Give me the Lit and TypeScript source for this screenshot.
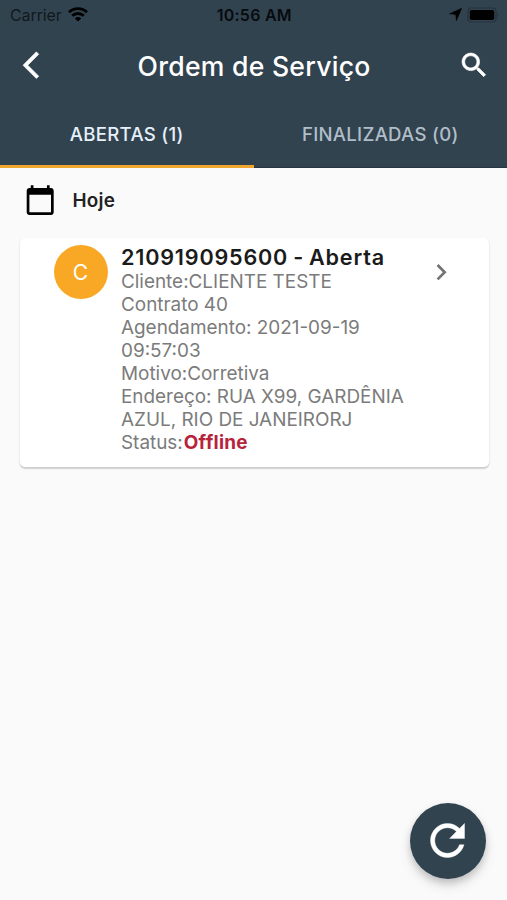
import { LitElement, html, css, svg } from "lit";
import { customElement, property } from "lit/decorators.js";

const icons = {
  back: "M11.67 3.87L9.9 2.1 0 12l9.9 9.9 1.77-1.77L3.54 12z",
  search:
    "M15.5 14h-.79l-.28-.27C15.41 12.59 16 11.11 16 9.5 16 5.91 13.09 3 9.5 3S3 5.91 3 9.5 5.91 16 9.5 16c1.61 0 3.09-.59 4.23-1.57l.27.28v.79l5 4.99L20.49 19l-4.99-5zm-6 0C7.01 14 5 11.99 5 9.5S7.01 5 9.5 5 14 7.01 14 9.5 11.99 14 9.5 14z",
  calendar:
    "M20 3h-1V1h-2v2H7V1H5v2H4c-1.1 0-2 .9-2 2v16c0 1.1.9 2 2 2h16c1.1 0 2-.9 2-2V5c0-1.1-.9-2-2-2zm0 18H4V8h16v13z",
  chevron: "M10 6L8.59 7.41 13.17 12l-4.58 4.59L10 18l6-6z",
  refresh:
    "M17.65 6.35C16.2 4.9 14.21 4 12 4c-4.42 0-7.99 3.58-7.99 8s3.57 8 7.99 8c3.73 0 6.84-2.55 7.73-6h-2.08c-.82 2.33-3.04 4-5.65 4-3.31 0-6-2.69-6-6s2.69-6 6-6c1.66 0 3.14.69 4.22 1.78L13 11h7V4l-2.35 2.35z",
};

@customElement("md-icon")
class MdIcon extends LitElement {
  @property() name: keyof typeof icons = "back";
  static styles = css`
    :host { display: block; width: 32.4px; height: 32.4px; flex: none; }
    svg { display: block; width: 100%; height: 100%; overflow: visible; fill: currentColor; stroke: currentColor; stroke-width: var(--weight, 0); stroke-linejoin: round; }
  `;
  render() {
    return html`<svg viewBox="0 0 24 24">${svg`<path d=${icons[this.name]}></path>`}</svg>`;
  }
}

@customElement("status-bar")
class StatusBar extends LitElement {
  static styles = css`
    :host { display: grid; grid-template-columns: 1fr auto 1fr; align-items: center; height: 30px; padding: 0 7px 0 10px; color: #070b0e; font-size: 16px; }
    .left, .right { display: flex; align-items: center; }
    .carrier { letter-spacing: -0.1px; color: #10181e; }
    .wifi { width: 20px; height: 15px; margin: 0 0 1px 6.5px; }
    .time { margin-right: 1.5px; font-weight: 600; letter-spacing: 0.25px; }
    .right { justify-content: flex-end; padding-bottom: 1px; }
    .location { width: 13px; height: 13px; margin-right: 5px; }
    .battery { width: 33px; height: 16px; }
  `;
  render() {
    return html`
      <div class="left">
        <span class="carrier">Carrier</span>
        <svg class="wifi" viewBox="0 0 20 15" fill="none" stroke="#000" stroke-width="2.9">
          <path d="M1 5.2a13 13 0 0 1 18 0"></path>
          <path d="M4.2 8.8a8.3 8.3 0 0 1 11.6 0"></path>
          <path d="M10 14.6L6.8 11.4a4.6 4.6 0 0 1 6.4 0z" fill="#000" stroke="none"></path>
        </svg>
      </div>
      <span class="time">10:56 AM</span>
      <div class="right">
        <svg class="location" viewBox="0 0 13 13"><path d="M12.7.3L7.4 12.7 6.7 6.5.4 5.8z" stroke="#000" stroke-width=".5"></path></svg>
        <svg class="battery" viewBox="0 0 33 16">
          <rect x="1" y="1" width="28" height="14" rx="3.5" fill="none" stroke="#25323c" stroke-width="1.2"></rect>
          <rect x="2.8" y="3" width="24.4" height="10" rx="1.8"></rect>
          <path d="M30.5 5.8q2 2.2 0 4.4z" fill="#25323c"></path>
        </svg>
      </div>
    `;
  }
}

@customElement("order-card")
class OrderCard extends LitElement {
  static styles = css`
    :host { display: flex; align-items: flex-start; box-sizing: border-box; height: 229px; margin: 0 18.5px 0 20px; padding: 7px 31px 0 33.5px; border-radius: 5px; background: #fff; box-shadow: 0 1.4px 1.4px rgba(0,0,0,.14), 0 1px 3px rgba(0,0,0,.07); }
    .avatar { display: flex; align-items: center; justify-content: center; flex: none; width: 54px; height: 54px; border-radius: 50%; background: #f9a825; color: #fff; font-size: 21px; }
    .body { flex: 1; margin-left: 13.5px; white-space: nowrap; color: #7b7b7b; font-size: 18.9px; line-height: 22.95px; letter-spacing: 0; }
    .title { margin-bottom: 1.4px; color: #1b1b1b; font-weight: 600; font-size: 21.6px; line-height: 24.5px; letter-spacing: 0.8px; word-spacing: -1.2px; }
    .offline { color: #b7233b; font-weight: 700; letter-spacing: 0.3px; margin-left: 1px; }
    .chevron { margin-top: 11px; color: #737373; }
  `;
  render() {
    return html`
      <div class="avatar">C</div>
      <div class="body">
        <div class="title">210919095600 - Aberta</div>
        <div>Cliente:CLIENTE TESTE</div>
        <div>Contrato 40</div>
        <div>Agendamento: 2021-09-19</div>
        <div>09:57:03</div>
        <div>Motivo:Corretiva</div>
        <div>Endereço: RUA X99, GARDÊNIA</div>
        <div>AZUL, RIO DE JANEIRORJ</div>
        <div>Status:<span class="offline">Offline</span></div>
      </div>
      <md-icon class="chevron" name="chevron"></md-icon>
    `;
  }
}

@customElement("app-root")
class AppRoot extends LitElement {
  static styles = css`
    :host { display: block; position: relative; height: 900px; overflow: hidden; background: #fafafa; font-family: Inter, "Liberation Sans", sans-serif; }
    header { height: 168px; background: #324350; color: #fff; }
    .bar { display: flex; align-items: center; justify-content: space-between; height: 71px; padding: 0 16.5px 0 22.7px; }
    .bar md-icon { --weight: 0.45; }
    .bar h1 { margin: 0 5px 0 0; font-size: 26.6px; font-weight: 500; letter-spacing: 0.25px; }
    .tabs { display: grid; grid-template-columns: 1fr 1fr; height: 67px; box-shadow: inset 0 -1px #28343e; }
    .tab { display: flex; align-items: center; justify-content: center; box-sizing: border-box; padding-top: 2px; border-bottom: 3px solid transparent; font-size: 18.6px; font-weight: 500; letter-spacing: 0.28px; color: #b0bec9; }
    .tab.active { color: #e6f0fa; border-bottom-color: #f0a52c; }
    .day { display: flex; align-items: center; gap: 16px; height: 70px; box-sizing: border-box; padding: 0 0 5px 24px; color: #000; }
    .day span { color: #222; font-size: 18.9px; font-weight: 600; letter-spacing: 0.3px; }
    .fab { position: absolute; right: 21.3px; bottom: 21.3px; display: flex; align-items: center; justify-content: center; width: 76px; height: 76px; border-radius: 50%; background: #324350; color: #fff; box-shadow: 0 4px 7px rgba(0,0,0,.16), 0 7px 13px rgba(0,0,0,.1); }
    .fab md-icon { width: 51px; height: 51px; --weight: 0.2; }
  `;
  render() {
    return html`
      <header>
        <status-bar></status-bar>
        <div class="bar">
          <md-icon name="back"></md-icon>
          <h1>Ordem de Serviço</h1>
          <md-icon name="search"></md-icon>
        </div>
        <nav class="tabs">
          <div class="tab active">ABERTAS (1)</div>
          <div class="tab">FINALIZADAS (0)</div>
        </nav>
      </header>
      <div class="day"><md-icon name="calendar"></md-icon><span>Hoje</span></div>
      <order-card></order-card>
      <div class="fab"><md-icon name="refresh"></md-icon></div>
    `;
  }
}
